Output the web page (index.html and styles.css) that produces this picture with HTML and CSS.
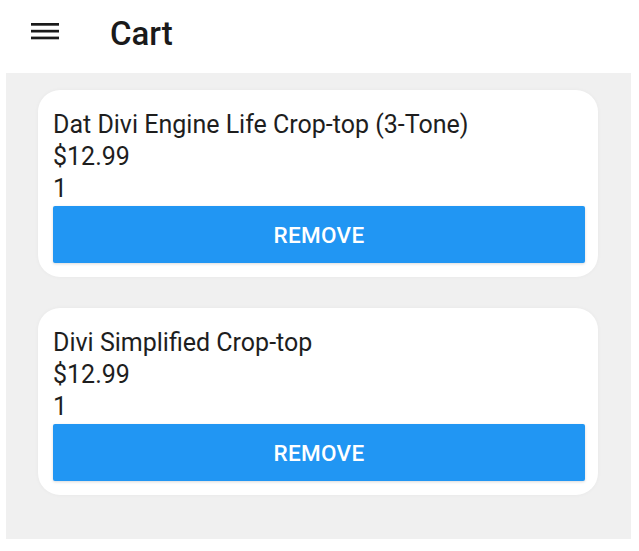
FILE: index.html
```html
<!DOCTYPE html>
<html>
<head>
<meta charset="utf-8">
<link rel="stylesheet" href="styles.css">
</head>
<body>
<header class="topbar">
  <svg class="menu" width="28" height="18" viewBox="0 0 28 18">
    <rect x="0" y="1" width="28" height="2.7" fill="#1a1a1a"/>
    <rect x="0" y="7.8" width="28" height="2.7" fill="#1a1a1a"/>
    <rect x="0" y="14.6" width="28" height="2.7" fill="#1a1a1a"/>
  </svg>
  <h1 class="title">Cart</h1>
</header>
<main class="content">
  <section class="card">
    <div class="line">Dat Divi Engine Life Crop-top (3-Tone)</div>
    <div class="line">$12.99</div>
    <div class="line">1</div>
    <button class="remove">REMOVE</button>
  </section>
  <section class="card">
    <div class="line">Divi Simplified Crop-top</div>
    <div class="line">$12.99</div>
    <div class="line">1</div>
    <button class="remove">REMOVE</button>
  </section>
</main>
</body>
</html>
```
FILE: styles.css
```css
html, body {
  margin: 0;
  padding: 0;
  background: #ffffff;
  font-family: Roboto, "Liberation Sans", sans-serif;
  color: #1c1c1c;
}
.topbar {
  height: 73px;
  display: flex;
  align-items: center;
  padding-left: 31px;
  box-sizing: border-box;
}
.menu {
  display: block;
  margin-top: -12px;
}
.title {
  margin: 0 0 0 51px;
  font-size: 33px;
  font-weight: 500;
  margin-top: -6px;
  color: #1a1a1a;
}
.content {
  margin: 0 8px 0 6px;
  background: #f0f0f0;
  padding: 17px 33px 44px 32px;
  display: flex;
  flex-direction: column;
  gap: 31px;
}
.card {
  background: #ffffff;
  border-radius: 22px;
  padding: 18px 13px 14px 15px;
  box-shadow: 0 0 4px rgba(0,0,0,0.04);
}
.line {
  font-size: 25px;
  line-height: 33px;
  height: 32px;
  color: #1e1e1e;
}
.remove {
  display: block;
  width: 100%;
  height: 57px;
  margin-top: 2px;
  border: none;
  border-radius: 2px;
  background: #2196f3;
  color: #ffffff;
  font-family: Roboto, "Liberation Sans", sans-serif;
  font-size: 22.5px;
  font-weight: 500;
  letter-spacing: 0.3px;
  box-shadow: 0 1px 3px rgba(0,0,0,0.15);
}
```
